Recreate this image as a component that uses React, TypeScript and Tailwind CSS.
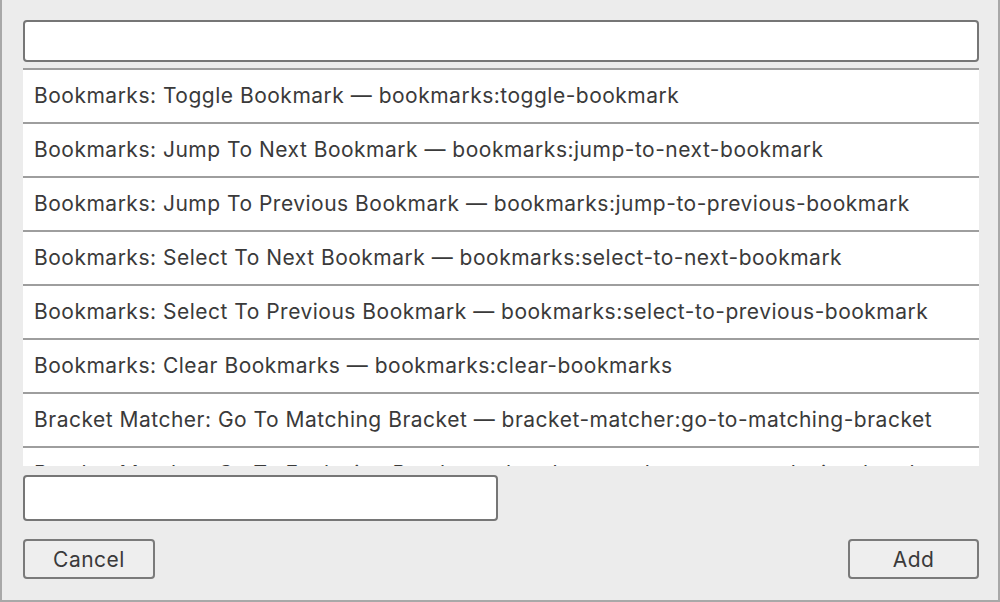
const commands = [
  'Bookmarks: Toggle Bookmark — bookmarks:toggle-bookmark',
  'Bookmarks: Jump To Next Bookmark — bookmarks:jump-to-next-bookmark',
  'Bookmarks: Jump To Previous Bookmark — bookmarks:jump-to-previous-bookmark',
  'Bookmarks: Select To Next Bookmark — bookmarks:select-to-next-bookmark',
  'Bookmarks: Select To Previous Bookmark — bookmarks:select-to-previous-bookmark',
  'Bookmarks: Clear Bookmarks — bookmarks:clear-bookmarks',
  'Bracket Matcher: Go To Matching Bracket — bracket-matcher:go-to-matching-bracket',
  'Bracket Matcher: Go To Enclosing Bracket — bracket-matcher:go-to-enclosing-bracket',
  'Bracket Matcher: Select Inside Brackets — bracket-matcher:select-inside-brackets',
];

const App = () => {
  return (
    <div className="flex h-[602px] w-[1000px] flex-col border-b-2 border-l-2 border-r-2 border-[#a8a8a8] bg-[#ececec] pb-[19px] pl-[21px] pr-[19px] pt-[20px] font-['Inter',sans-serif] text-[21px] tracking-[0.5px] text-[#3a3a3a]">
      <input
        type="text"
        aria-label="Search commands"
        className="h-[42px] w-full rounded-[4px] border-2 border-[#767676] bg-white px-2 outline-none"
      />

      <div className="mt-[6px] h-[398px] overflow-hidden bg-white">
        {commands.map((cmd) => (
          <div
            key={cmd}
            className="flex h-[54px] items-center whitespace-nowrap border-t-2 border-[#9e9e9e] pl-[11px] leading-normal"
          >
            {cmd}
          </div>
        ))}
      </div>

      <input
        type="text"
        aria-label="Keystroke"
        className="mt-[9px] h-[46px] w-[475px] rounded-[4px] border-2 border-[#767676] bg-white px-2 outline-none"
      />

      <div className="mt-[18px] flex items-center justify-between">
        <button className="h-[40px] w-[132px] rounded-[4px] border-2 border-[#7a7a7a] bg-[#eeeeee] pt-[2px] text-[#3a3a3a]">
          Cancel
        </button>
        <button className="h-[40px] w-[131px] rounded-[4px] border-2 border-[#7a7a7a] bg-[#eeeeee] pt-[2px] text-[#3a3a3a]">
          Add
        </button>
      </div>
    </div>
  );
};

export default App;
